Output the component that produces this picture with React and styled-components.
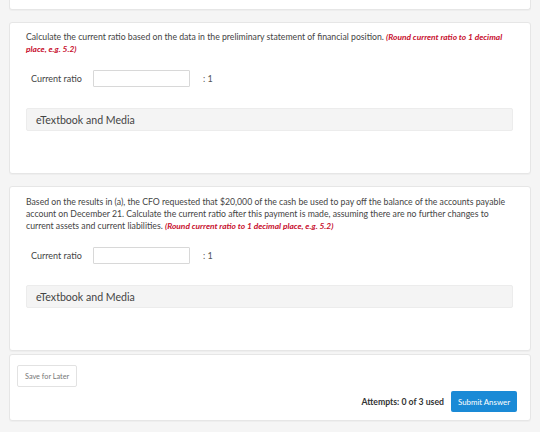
import React from "react";
import styled, { createGlobalStyle } from "styled-components";

const Global = createGlobalStyle`
  html, body { margin: 0; padding: 0; background: #f5f5f5; }
  body { font-family: Lato, "Open Sans", sans-serif; color: #444; }
  * { box-sizing: border-box; }
`;

const Page = styled.div`
  display: flex;
  flex-direction: column;
  gap: 12px;
  padding: 0 9px 14px 9px;
  width: 540px;
`;

const Card = styled.div`
  background: #fff;
  border: 1px solid #e6e6e6;
  border-radius: 3px;
  box-shadow: 0 1px 1px rgba(0, 0, 0, 0.03);
  padding: ${(p) => p.$pad || "8px 17px 42px 16px"};
  ${(p) => (p.$stub ? "height: 10px; border-top: none; border-radius: 0 0 3px 3px;" : "")}
`;

const Question = styled.p`
  margin: 0;
  font-size: 8.7px;
  line-height: 12px;
  color: #444;
`;

const Hint = styled.em`
  color: #c8102e;
  font-weight: 700;
  font-style: italic;
  font-size: 8.4px;
`;

const Row = styled.div`
  display: flex;
  align-items: center;
  margin-top: 15px;
  padding-left: 5px;
`;

const Label = styled.span`
  font-size: 9px;
  color: #444;
  width: 62px;
`;

const Input = styled.input`
  width: 97px;
  height: 17px;
  border: 1px solid #d8d8d8;
  border-radius: 1px;
  background: #fff;
  outline: none;
  padding: 0 4px;
`;

const Suffix = styled.span`
  font-size: 9px;
  color: #555;
  margin-left: 13px;
`;

const Media = styled.div`
  margin-top: 21px;
  height: 23px;
  background: #f4f4f4;
  border: 1px solid #ececec;
  border-radius: 2px;
  display: flex;
  align-items: center;
  padding-left: 9px;
  font-size: 10.6px;
  color: #444;
`;

const FooterCard = styled(Card)`
  margin-top: -9px;
  display: flex;
  flex-direction: column;
`;

const SaveButton = styled.button`
  align-self: flex-start;
  height: 22px;
  padding: 0 7px;
  border: 1px solid #e2e2e2;
  border-radius: 2px;
  background: #fff;
  font-family: Lato, sans-serif;
  font-size: 7.3px;
  color: #777;
`;

const Actions = styled.div`
  display: flex;
  justify-content: flex-end;
  align-items: center;
  margin-top: 4px;
  gap: 7px;
`;

const Attempts = styled.span`
  font-size: 8.7px;
  font-weight: 700;
  color: #333;
`;

const SubmitButton = styled.button`
  height: 21px;
  padding: 0 7px;
  border: none;
  border-radius: 2px;
  background: #1a8ad6;
  color: #fff;
  font-family: Lato, sans-serif;
  font-size: 7.85px;
`;

const RatioRow = () => (
  <Row>
    <Label>Current ratio</Label>
    <Input />
    <Suffix>: 1</Suffix>
  </Row>
);

export default function App() {
  return (
    <>
      <Global />
      <Page>
        <Card $stub $pad="0" />
        <Card>
          <Question>
            Calculate the current ratio based on the data in the preliminary statement of financial position.{" "}
            <Hint>(Round current ratio to 1 decimal place, e.g. 5.2)</Hint>
          </Question>
          <RatioRow />
          <Media>eTextbook and Media</Media>
        </Card>
        <Card $pad="9px 17px 42px 16px">
          <Question>
            Based on the results in (a), the CFO requested that $20,000 of the cash be used to pay off the balance of the accounts payable
            account on December 21. Calculate the current ratio after this payment is made, assuming there are no further changes to
            current assets and current liabilities. <Hint>(Round current ratio to 1 decimal place, e.g. 5.2)</Hint>
          </Question>
          <RatioRow />
          <Media>eTextbook and Media</Media>
        </Card>
        <FooterCard $pad="10px 13px 8px 7px">
          <SaveButton>Save for Later</SaveButton>
          <Actions>
            <Attempts>Attempts: 0 of 3 used</Attempts>
            <SubmitButton>Submit Answer</SubmitButton>
          </Actions>
        </FooterCard>
      </Page>
    </>
  );
}
